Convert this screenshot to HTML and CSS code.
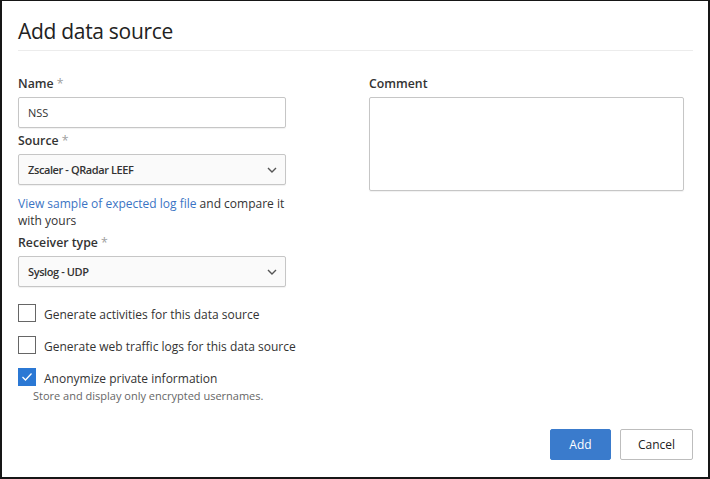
FILE: index.html
```html
<!DOCTYPE html>
<html lang="en">
<head>
<meta charset="utf-8">
<title>Add data source</title>
<link rel="stylesheet" href="styles.css">
</head>
<body>
<div class="dialog">
  <header class="dialog-header">
    <h1 class="dialog-title">Add data source</h1>
  </header>
  <div class="form-grid">
    <div class="col col-left">
      <div class="field">
        <label class="field-label">Name <span class="req">*</span></label>
        <div class="input">NSS</div>
      </div>
      <div class="field">
        <label class="field-label">Source <span class="req">*</span></label>
        <div class="select">
          <span class="select-text">Zscaler - QRadar LEEF</span>
          <svg class="chev" width="10" height="6" viewBox="0 0 10 6"><path d="M1 1 L5 5 L9 1" fill="none" stroke="#555" stroke-width="1.4"/></svg>
        </div>
      </div>
      <p class="hint"><a class="link">View sample of expected log file</a> and compare it with yours</p>
      <div class="field">
        <label class="field-label">Receiver type <span class="req">*</span></label>
        <div class="select">
          <span class="select-text">Syslog - UDP</span>
          <svg class="chev" width="10" height="6" viewBox="0 0 10 6"><path d="M1 1 L5 5 L9 1" fill="none" stroke="#555" stroke-width="1.4"/></svg>
        </div>
      </div>
    </div>
    <div class="col col-right">
      <div class="field">
        <label class="field-label">Comment</label>
        <div class="textarea"></div>
      </div>
    </div>
  </div>
  <div class="options">
    <div class="check-row">
      <span class="checkbox"></span>
      <span class="check-label">Generate activities for this data source</span>
    </div>
    <div class="check-row">
      <span class="checkbox"></span>
      <span class="check-label">Generate web traffic logs for this data source</span>
    </div>
    <div class="check-row">
      <span class="checkbox checked"><svg width="12" height="10" viewBox="0 0 12 10"><path d="M1.5 5 L4.5 8 L10.5 1.5" fill="none" stroke="#fff" stroke-width="1.3"/></svg></span>
      <span class="check-label">Anonymize private information</span>
    </div>
    <p class="check-help">Store and display only encrypted usernames.</p>
  </div>
  <footer class="actions">
    <button class="btn btn-primary">Add</button>
    <button class="btn btn-default">Cancel</button>
  </footer>
</div>
</body>
</html>
```
FILE: styles.css
```css
* { box-sizing: border-box; }
html, body { margin: 0; padding: 0; }
body {
  width: 710px;
  height: 479px;
  background: #fff;
  font-family: "Open Sans", "Noto Sans", sans-serif;
  color: #333;
}
.dialog {
  height: 479px;
  border-style: solid;
  border-color: #161616;
  border-width: 1px 2px 2px 2px;
  padding: 0 15px 0 16px;
  display: flex;
  flex-direction: column;
}
.dialog-header {
  border-bottom: 1px solid #ececec;
  height: 50px;
  padding-top: 15px;
}
.dialog-title {
  margin: 0;
  font-size: 21px;
  font-weight: 400;
  line-height: 30px;
  color: #222;
  letter-spacing: -0.3px;
}
.form-grid {
  display: grid;
  grid-template-columns: 268px 315px;
  column-gap: 83px;
  padding-top: 24px;
}
.field { display: flex; flex-direction: column; }
.field + .field { margin-top: 4px; }
.field-label {
  font-size: 12.3px;
  font-weight: 600;
  line-height: 18px;
  margin-bottom: 4px;
  color: #333;
}
.req { color: #a0a0a0; font-weight: 400; }
.input, .select {
  height: 31px;
  border: 1px solid #c6c6c6;
  border-radius: 2px;
  box-shadow: 0 1px 1px rgba(0,0,0,0.06);
  display: flex;
  align-items: center;
  padding: 0 9px;
  font-size: 11px;
  color: #333;
}
.select {
  background: #fafafa;
  justify-content: space-between;
  font-weight: 600;
  letter-spacing: -0.4px;
  padding-right: 8px;
}
.chev { display: block; }
.hint {
  margin: 10px 0 5px;
  font-size: 12px;
  line-height: 17px;
  color: #333;
}
.link { color: #3b74c4; }
.textarea {
  height: 94px;
  border: 1px solid #c6c6c6;
  border-radius: 2px;
  box-shadow: 0 1px 1px rgba(0,0,0,0.06);
}
.options {
  padding-top: 17px;
  display: flex;
  flex-direction: column;
}
.check-row {
  display: flex;
  align-items: center;
  height: 18px;
  gap: 8px;
}
.check-row + .check-row { margin-top: 14px; }
.checkbox {
  width: 18px;
  height: 18px;
  border: 1px solid #666;
  display: flex;
  align-items: center;
  justify-content: center;
  flex: none;
}
.checkbox.checked { background: #2b78d4; border-color: #2b78d4; }
.check-label { font-size: 12px; color: #333; white-space: nowrap; padding-top: 2px; }
.check-help {
  margin: 2px 0 0 15px;
  font-size: 11px;
  color: #666;
  line-height: 15px;
}
.actions {
  margin-top: auto;
  padding-bottom: 17px;
  display: flex;
  justify-content: flex-end;
  gap: 9px;
}
.btn {
  height: 31px;
  font-family: inherit;
  font-size: 12px;
  border-radius: 2px;
  padding: 0;
}
.btn-primary {
  width: 61px;
  background: #3a7bcc;
  border: 1px solid #3a7bcc;
  color: #fff;
}
.btn-default {
  width: 73px;
  background: #fff;
  border: 1px solid #bdbdbd;
  color: #222;
}
```
